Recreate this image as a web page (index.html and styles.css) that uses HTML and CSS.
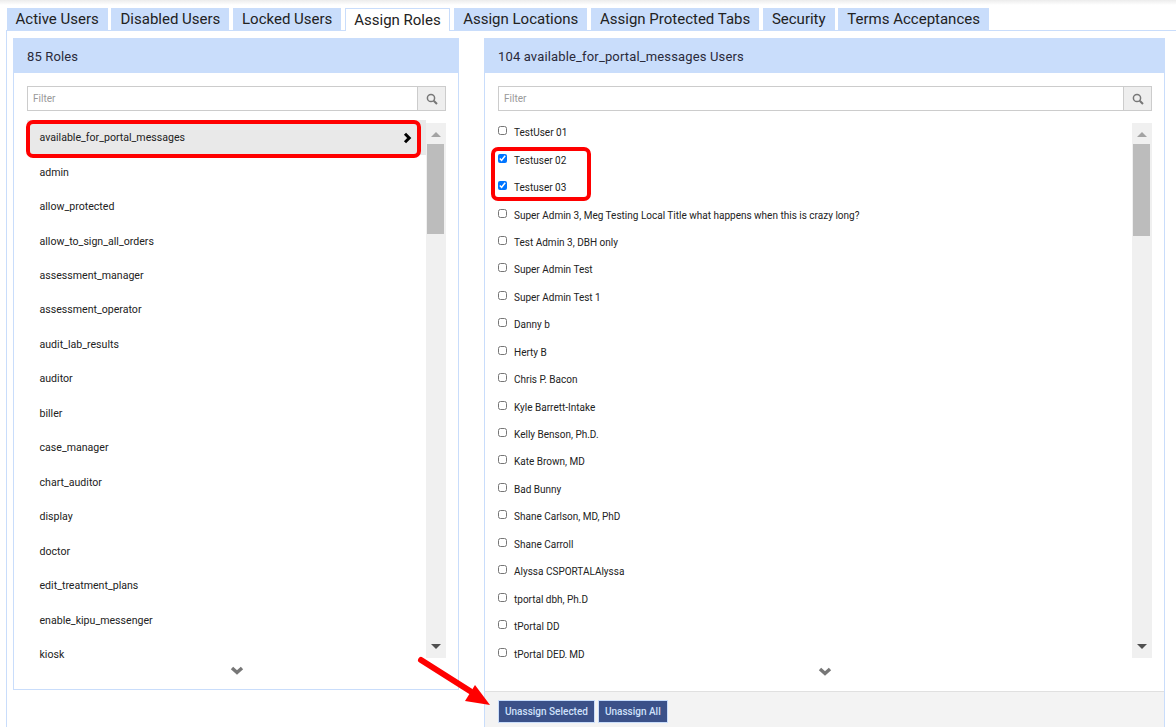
FILE: index.html
```html
<!DOCTYPE html>
<html lang="en">
<head>
<meta charset="utf-8">
<title>Assign Roles</title>
<link rel="stylesheet" href="styles.css">
</head>
<body>
<nav class="tabs">
  <a class="tab">Active Users</a>
  <a class="tab">Disabled Users</a>
  <a class="tab">Locked Users</a>
  <a class="tab tab-active">Assign Roles</a>
  <a class="tab">Assign Locations</a>
  <a class="tab">Assign Protected Tabs</a>
  <a class="tab">Security</a>
  <a class="tab">Terms Acceptances</a>
</nav>
<main class="content">
  <section class="panel panel-roles">
    <header class="panel-head">85 Roles</header>
    <div class="panel-body">
      <div class="filter">
        <input class="filter-input" type="text" placeholder="Filter">
        <span class="filter-btn"><svg width="12" height="12" viewBox="0 0 12 12"><circle cx="5" cy="5" r="3.6" fill="none" stroke="#777" stroke-width="1.5"/><path d="M7.7 7.7L11 11" stroke="#777" stroke-width="2"/></svg></span>
      </div>
      <div class="list-wrap">
        <ul class="roles">
          <li class="role role-selected">available_for_portal_messages<svg class="role-arrow" width="9" height="12" viewBox="0 0 9 12"><path d="M2 1.8L6.2 6L2 10.2" fill="none" stroke="#000" stroke-width="3"/></svg></li>
          <li class="role">admin</li>
          <li class="role">allow_protected</li>
          <li class="role">allow_to_sign_all_orders</li>
          <li class="role">assessment_manager</li>
          <li class="role">assessment_operator</li>
          <li class="role">audit_lab_results</li>
          <li class="role">auditor</li>
          <li class="role">biller</li>
          <li class="role">case_manager</li>
          <li class="role">chart_auditor</li>
          <li class="role">display</li>
          <li class="role">doctor</li>
          <li class="role">edit_treatment_plans</li>
          <li class="role">enable_kipu_messenger</li>
          <li class="role">kiosk</li>
        </ul>
        <div class="scrollbar">
          <span class="arrow-up"></span>
          <span class="thumb thumb-roles"></span>
          <span class="arrow-down"></span>
        </div>
      </div>
      <div class="more"><svg width="14" height="9" viewBox="0 0 14 9"><path d="M2 2L7 6.5L12 2" fill="none" stroke="#777" stroke-width="3.5"/></svg></div>
    </div>
  </section>
  <section class="panel panel-users">
    <header class="panel-head">104 available_for_portal_messages Users</header>
    <div class="panel-body">
      <div class="filter">
        <input class="filter-input" type="text" placeholder="Filter">
        <span class="filter-btn"><svg width="12" height="12" viewBox="0 0 12 12"><circle cx="5" cy="5" r="3.6" fill="none" stroke="#777" stroke-width="1.5"/><path d="M7.7 7.7L11 11" stroke="#777" stroke-width="2"/></svg></span>
      </div>
      <div class="list-wrap list-wrap-users">
        <ul class="users">
          <li class="user"><input type="checkbox" class="check">TestUser 01</li>
          <li class="user"><input type="checkbox" class="check" checked>Testuser 02</li>
          <li class="user"><input type="checkbox" class="check" checked>Testuser 03</li>
          <li class="user"><input type="checkbox" class="check">Super Admin 3, Meg Testing Local Title what happens when this is crazy long?</li>
          <li class="user"><input type="checkbox" class="check">Test Admin 3, DBH only</li>
          <li class="user"><input type="checkbox" class="check">Super Admin Test</li>
          <li class="user"><input type="checkbox" class="check">Super Admin Test 1</li>
          <li class="user"><input type="checkbox" class="check">Danny b</li>
          <li class="user"><input type="checkbox" class="check">Herty B</li>
          <li class="user"><input type="checkbox" class="check">Chris P. Bacon</li>
          <li class="user"><input type="checkbox" class="check">Kyle Barrett-Intake</li>
          <li class="user"><input type="checkbox" class="check">Kelly Benson, Ph.D.</li>
          <li class="user"><input type="checkbox" class="check">Kate Brown, MD</li>
          <li class="user"><input type="checkbox" class="check">Bad Bunny</li>
          <li class="user"><input type="checkbox" class="check">Shane Carlson, MD, PhD</li>
          <li class="user"><input type="checkbox" class="check">Shane Carroll</li>
          <li class="user"><input type="checkbox" class="check">Alyssa CSPORTALAlyssa</li>
          <li class="user"><input type="checkbox" class="check">tportal dbh, Ph.D</li>
          <li class="user"><input type="checkbox" class="check">tPortal DD</li>
          <li class="user"><input type="checkbox" class="check">tPortal DED, MD</li>
        </ul>
        <div class="scrollbar">
          <span class="arrow-up"></span>
          <span class="thumb thumb-users"></span>
          <span class="arrow-down"></span>
        </div>
      </div>
      <div class="more more-users"><svg width="14" height="9" viewBox="0 0 14 9"><path d="M2 2L7 6.5L12 2" fill="none" stroke="#777" stroke-width="3.5"/></svg></div>
    </div>
    <footer class="panel-foot">
      <button class="btn" type="button">Unassign Selected</button>
      <button class="btn" type="button">Unassign All</button>
    </footer>
  </section>
</main>
<div class="mark mark-role"></div>
<div class="mark mark-users"></div>
<svg class="mark-arrow" width="80" height="56" viewBox="0 0 80 56"><path d="M5 5L54 36" stroke="#f00" stroke-width="6" stroke-linecap="round"/><path d="M74 50L49 46L59 30Z" fill="#f00"/></svg>
</body>
</html>
```
FILE: styles.css
```css
* { box-sizing: border-box; }
html, body { margin: 0; height: 727px; overflow: hidden; }
body {
  position: relative;
  background: #fff linear-gradient(#ececec, #fff 5px) no-repeat;
  font-family: Roboto, "Liberation Sans", sans-serif;
  color: #222;
  padding: 8px 0 0 6px;
}
.tabs { display: flex; gap: 3.7px; height: 22px; padding-left: .5px; }
.tab {
  display: flex;
  align-items: center;
  padding: 0 9px;
  background: #c9ddfb;
  font-size: 15px;
  color: #222;
}
.tab-active {
  background: #fff;
  border: 1px solid #c9ddfb;
  border-bottom: 0;
  height: 23px;
  padding: 0 8px 1px;
  margin: 0 .8px 0 .2px;
  z-index: 1;
}
.content {
  display: flex;
  align-items: flex-start;
  gap: 25px;
  height: 697px;
  padding: 7px 11px 0 6px;
  border-top: 1px solid #c9ddfb;
  border-left: 1px solid #c9ddfb;
}
.panel { border: 1px solid #c9ddfb; border-top: 0; background: #fff; }
.panel-roles { width: 446px; height: 652px; }
.panel-users { flex: 1; height: 690px; display: flex; flex-direction: column; border-bottom: 0; }
.panel-head {
  height: 35px;
  margin: 0 -1px;
  padding: 2px 14px 0;
  display: flex;
  align-items: center;
  background: #c9ddfb;
  font-size: 13px;
  letter-spacing: .15px;
  color: #2a2a3a;
}
.panel-body { padding: 13px 12px 0 13px; flex: 1; }
.filter { display: flex; height: 25px; }
.filter-input {
  flex: 1;
  min-width: 0;
  border: 1px solid #ccc;
  border-right: 0;
  padding: 0 5px;
  font: 10px Roboto, sans-serif;
  outline: 0;
}
.filter-input::placeholder { color: #999; }
.filter-btn {
  width: 29px;
  display: flex;
  align-items: center;
  justify-content: center;
  background: #eee;
  border: 1px solid #ccc;
}
.list-wrap { display: flex; height: 538px; margin-top: 9px; overflow: hidden; }
.list-wrap-users { height: 540px; margin-top: 7px; }
.roles, .users { flex: 1; min-width: 0; margin: 0; padding: 0; list-style: none; overflow: hidden; }
.roles { padding-top: .4px; }
.users { padding-top: 1px; }
.role {
  height: 34.47px;
  display: flex;
  align-items: center;
  justify-content: space-between;
  padding: 0 14px 0 12.5px;
  font-size: 10.6px;
  color: #222;
}
.role-selected { background: #e9e9e9; }
.user {
  height: 27.45px;
  display: flex;
  align-items: center;
  font-size: 10px;
  color: #222;
  white-space: nowrap;
}
.check { width: 9px; height: 9px; margin: -4px 7px 0 0; accent-color: #0075ff; }
.scrollbar {
  flex: none;
  width: 20px;
  margin-top: 3px;
  background: #f0f0f0;
  display: flex;
  flex-direction: column;
  align-items: center;
  padding-top: 9px;
}
.list-wrap-users .scrollbar { margin-top: 5px; }
.arrow-up { width: 0; height: 0; border: 5px solid transparent; border-top: 0; border-bottom: 5px solid #a3a3a3; }
.arrow-down { width: 0; height: 0; margin-top: auto; margin-bottom: 9px; border: 5px solid transparent; border-bottom: 0; border-top: 5px solid #505050; }
.thumb { width: 17px; background: #bcbcbc; margin: 7px 0 0 1px; align-self: flex-start; }
.thumb-roles { height: 90px; }
.thumb-users { height: 92px; }
.more { display: flex; justify-content: center; padding-top: 8px; }
.more-users { padding-top: 9px; }
.panel-foot {
  height: 37px;
  flex: none;
  display: flex;
  gap: 3px;
  align-items: flex-start;
  padding: 8px 13px;
  background: #f3f3f3;
  border-top: 1px solid #e0e0e0;
}
.btn {
  height: 23px;
  padding: 0 6px;
  background: #3b5189;
  border: 1px solid #c9ddfb;
  color: #cfe0fb;
  font: 500 10px Roboto, sans-serif;
}
.mark { position: absolute; border: 4px solid #f00; border-radius: 7px; }
.mark-role { left: 26px; top: 120px; width: 395px; height: 38px; }
.mark-users { left: 490.5px; top: 147px; width: 100px; height: 54px; }
.mark-arrow { position: absolute; left: 416px; top: 655px; }
```
